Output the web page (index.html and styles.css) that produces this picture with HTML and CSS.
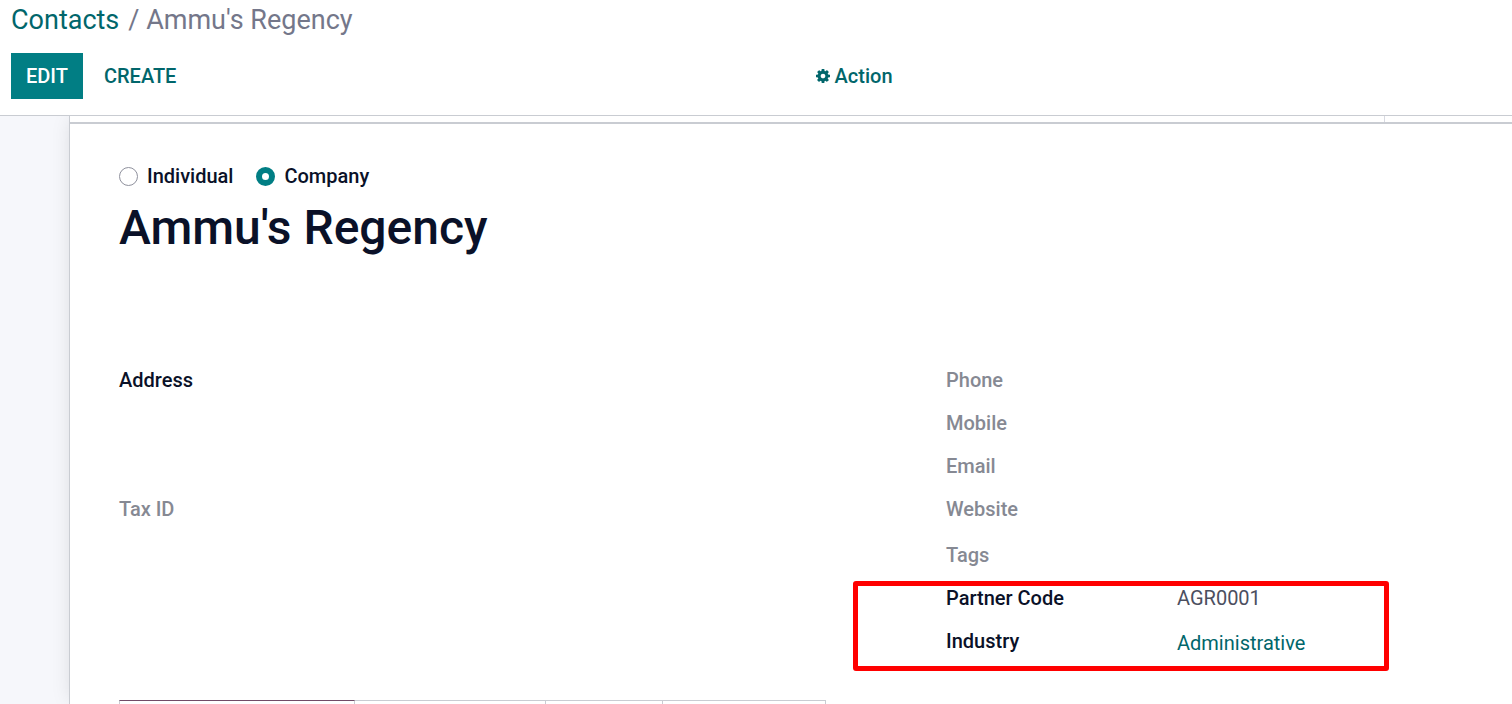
FILE: index.html
```html
<!DOCTYPE html>
<html lang="en">
<head>
<meta charset="utf-8">
<meta name="viewport" content="width=device-width, initial-scale=1">
<title>Ammu's Regency</title>
<link rel="stylesheet" href="styles.css">
</head>
<body>
<header class="control-panel">
  <nav class="breadcrumb"><a href="#">Contacts</a><span class="current">/ Ammu's Regency</span></nav>
  <div class="toolbar">
    <div class="buttons">
      <button class="btn btn-primary" type="button">EDIT</button>
      <button class="btn btn-link" type="button">CREATE</button>
    </div>
    <button class="action" type="button">
      <svg class="cog" viewBox="0 0 1536 1536" aria-hidden="true"><path fill="currentColor" d="M1024 768q0-106-75-181t-181-75-181 75-75 181 75 181 181 75 181-75 75-181zm512-109v222q0 12-8 23t-20 13l-185 28q-19 54-39 91 35 50 107 138 10 12 10 25t-9 23q-27 37-99 108t-94 71q-12 0-26-9l-138-108q-44 23-91 38-16 136-29 186-7 28-36 28H657q-14 0-24.500-8.500T621 1506l-28-184q-49-16-90-37l-141 107q-10 9-25 9-14 0-25-11-126-114-165-168-7-10-7-23 0-12 8-23 15-21 51-66.500t54-70.500q-27-50-41-99L29 913q-13-2-21-12.500T0 877V655q0-12 8-23t19-13l186-28q14-46 39-92-40-57-107-138-10-12-10-24 0-10 9-23 26-36 98.500-107.500T337 135q13 0 26 10l138 107q44-23 91-38 16-136 29-186 7-28 36-28h222q14 0 24.500 8.500T915 30l28 184q49 16 90 37l142-107q9-9 24-9 13 0 25 10 129 119 165 170 7 8 7 22 0 12-8 23-15 21-51 66.500t-54 70.500q26 50 41 98l183 28q13 2 21 12.500t8 23.500z"/></svg>
      Action
    </button>
  </div>
</header>
<main class="content">
  <div class="sheet">
    <div class="stat-strip"><span class="stat"></span></div>
    <div class="sheet-body">
      <div class="company-type">
        <label><input type="radio" name="type">Individual</label>
        <label><input type="radio" name="type" checked>Company</label>
      </div>
      <h1>Ammu's Regency</h1>
      <div class="groups">
        <div class="group">
          <div class="row address strong">Address</div>
          <div class="row">Tax ID</div>
        </div>
        <dl class="group">
          <div class="row"><dt>Phone</dt></div>
          <div class="row"><dt>Mobile</dt></div>
          <div class="row"><dt>Email</dt></div>
          <div class="row website"><dt>Website</dt></div>
          <div class="row"><dt>Tags</dt></div>
          <div class="marked">
            <div class="row"><dt class="strong">Partner Code</dt><dd>AGR0001</dd></div>
            <div class="row"><dt class="strong">Industry</dt><dd class="linked"><a href="#">Administrative</a></dd></div>
          </div>
        </dl>
      </div>
      <div class="tabs">
        <span class="tab tab-active"></span><span class="tab tab-large"></span><span class="tab tab-small"></span><span class="tab tab-medium"></span>
      </div>
    </div>
  </div>
</main>
</body>
</html>
```
FILE: styles.css
```css
*, *::after { box-sizing: border-box; }
body {
  margin: 0;
  height: 100vh;
  overflow: hidden;
  display: flex;
  flex-direction: column;
  font: 400 20px/24px Roboto, "Liberation Sans", sans-serif;
  color: #4c4f5f;
  background: #fff;
}
a { color: #01666b; text-decoration: none; }
button { font: inherit; font-weight: 500; border: 0; background: none; color: #01666b; cursor: pointer; }
.control-panel { padding: 0 11px 16px; border-bottom: 1px solid #c9ccd2; }
.breadcrumb { display: flex; gap: 9px; font-size: 27px; line-height: 40px; }
.current { color: #74778a; }
.toolbar { display: grid; grid-template-columns: 54% 1fr; align-items: center; margin-top: 13px; }
.buttons { display: flex; gap: 6px; }
.btn { height: 46px; padding: 0 15px; }
.btn-primary { background: #017e84; color: #fff; }
.action { display: flex; align-items: center; justify-self: start; gap: 5px; padding: 0; }
.cog { width: 14px; height: 14px; }
.content { flex: 1; min-height: 0; display: flex; background: #f6f7fb; overflow: hidden; }
.sheet {
  flex: 1;
  display: flex;
  flex-direction: column;
  margin-left: 69px;
  border-left: 1px solid #c9ccd2;
  background: #fff;
  box-shadow: 0 0 20px -4px rgba(0, 0, 0, 0.15);
}
.stat-strip { flex: none; display: flex; justify-content: flex-end; height: 8px; border-bottom: 2px solid #c9ccd2; }
.stat { width: 128px; border-left: 1px solid #d8dae2; }
.sheet-body { flex: 1; min-height: 0; display: flex; flex-direction: column; padding: 40px 0 0 49px; }
.company-type { display: flex; gap: 23px; font-weight: 500; color: #0a1128; }
.company-type label { display: flex; align-items: center; gap: 9px; }
.company-type input {
  appearance: none;
  width: 19px;
  height: 19px;
  margin: 0;
  border: 1px solid #8f919d;
  border-radius: 50%;
}
.company-type input:checked { border: 6px solid #017e84; }
h1 { margin: 11px 0 0; font-size: 48px; line-height: 58px; font-weight: 500; color: #0a1128; }
.groups { display: grid; grid-template-columns: 827fr 566fr; margin-top: 111px; }
.group { margin: 0; font-weight: 500; color: #868993; }
.row { display: grid; grid-template-columns: 231px 1fr; height: 43px; }
.address { height: 129px; }
.website { height: 46px; }
.strong { color: #0a1128; }
dd { margin: 0; font-weight: 400; color: #4c4f5f; }
.linked { padding-top: 2px; }
.marked { position: relative; }
.marked::after {
  content: "";
  position: absolute;
  top: -5px;
  left: -93px;
  width: 536px;
  height: 90px;
  border: 5px solid #f00;
  border-radius: 3px;
  pointer-events: none;
}
.tabs { flex: 1; min-height: 0; display: flex; margin-top: 28px; }
.tab { border: 1px solid #c9ccd2; border-width: 1px 1px 0 0; }
.tab-active { width: 236px; border-left-width: 1px; border-top-color: #714b67; }
.tab-large { width: 191px; }
.tab-small { width: 117px; }
.tab-medium { width: 163px; }
```
